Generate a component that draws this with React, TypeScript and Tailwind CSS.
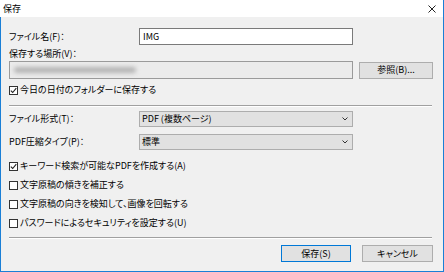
import React from "react";

const FONT = "font-['Noto_Sans_CJK_JP','Noto_Sans_CJK_SC',sans-serif] [font-feature-settings:'palt']";

function Check({ checked, label }: { checked?: boolean; label: string }) {
  return (
    <div className="flex items-center h-[12px]">
      <div className="w-[9px] h-[9px] border border-[#333] bg-white flex items-center justify-center">
        {checked && (
          <svg width="7" height="7" viewBox="0 0 7 7">
            <path d="M0.8 3.6 L2.7 5.5 L6.3 1.2" fill="none" stroke="#222" strokeWidth="1.1" />
          </svg>
        )}
      </div>
      <span className="ml-[2px] text-[9px] leading-[12px] text-black">{label}</span>
    </div>
  );
}

function Select({ value }: { value: string }) {
  return (
    <div className="w-[214px] h-[16px] bg-[#e1e1e1] border border-[#adadad] flex items-center pl-[2px] pr-[4px]">
      <span className="flex-1 text-[9px] leading-[12px]">{value}</span>
      <svg width="6" height="4" viewBox="0 0 6 4">
        <path d="M0.5 0.5 L3 3 L5.5 0.5" fill="none" stroke="#333" strokeWidth="1" />
      </svg>
    </div>
  );
}

function Separator() {
  return (
    <div className="w-[423px]">
      <div className="h-px bg-[#a0a0a0]" />
      <div className="h-px bg-white" />
    </div>
  );
}

export default function App() {
  return (
    <div className={`w-[444px] h-[272px] flex flex-col bg-[#f0f0f0] text-black ${FONT}`}>
      {/* title bar */}
      <div className="h-[17px] bg-white flex items-center justify-between pl-[3px] pr-[7px] border-r border-[#1a7fd6]">
        <span className="text-[9px] leading-[12px]">保存</span>
        <svg width="8" height="8" viewBox="0 0 8 8">
          <path d="M0.5 0.5 L7.5 7.5 M7.5 0.5 L0.5 7.5" stroke="#222" strokeWidth="1" />
        </svg>
      </div>

      <div className="flex-1 flex flex-col pl-[8px] pr-[10px] border-l border-r border-b border-[#1a7fd6]">
        <div className="mt-[11px] flex items-center h-[17px]">
          <span className="w-[130px] text-[9px] leading-[12px]">ファイル名(F)：</span>
          <div className="w-[214px] h-[17px] bg-white border border-[#7a7a7a] flex items-center pl-[3px] text-[9px]">
            IMG
          </div>
        </div>

        <div className="mt-[3px] h-[12px] text-[9px] leading-[12px]">保存する場所(V)：</div>

        <div className="mt-[1px] flex items-center gap-[6px]">
          <div className="w-[344px] h-[18px] bg-[#ebebeb] border border-[#9a9a9a] flex items-center pl-[4px] overflow-hidden">
            <div className="w-[122px] h-[6px] bg-[#b4b4b4] blur-[2px] rounded-sm" />
          </div>
          <div className="w-[74px] h-[17px] bg-[#e1e1e1] border border-[#adadad] flex items-center justify-center text-[9px] leading-[12px]">
            参照(B)...
          </div>
        </div>

        <div className="mt-[5px]">
          <Check checked label="今日の日付のフォルダーに保存する" />
        </div>

        <div className="mt-[9px]">
          <Separator />
        </div>

        <div className="mt-[4px] flex items-center">
          <span className="w-[130px] text-[9px] leading-[12px]">ファイル形式(T)：</span>
          <Select value="PDF (複数ページ)" />
        </div>
        <div className="mt-[7px] flex items-center">
          <span className="w-[130px] text-[9px] leading-[12px]">PDF圧縮タイプ(P)：</span>
          <Select value="標準" />
        </div>

        <div className="mt-[10px] flex flex-col gap-[7px]">
          <Check checked label="キーワード検索が可能なPDFを作成する(A)" />
          <Check label="文字原稿の傾きを補正する" />
          <Check label="文字原稿の向きを検知して、画像を回転する" />
          <Check label="パスワードによるセキュリティを設定する(U)" />
        </div>

        <div className="mt-[8px]">
          <Separator />
        </div>

        <div className="mt-[6px] flex justify-end gap-[11px]">
          <div className="w-[70px] h-[17px] bg-[#e1e1e1] border border-[#0078d7] flex items-center justify-center text-[9px] leading-[12px]">
            保存(S)
          </div>
          <div className="w-[71px] h-[17px] bg-[#e1e1e1] border border-[#adadad] flex items-center justify-center text-[9px] leading-[12px]">
            キャンセル
          </div>
        </div>
      </div>
    </div>
  );
}
